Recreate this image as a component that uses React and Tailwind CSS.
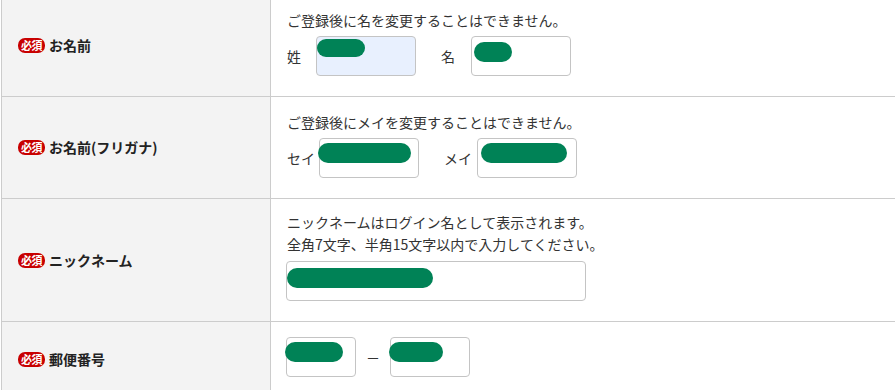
import React from 'react'

const font = { fontFamily: '"Noto Sans CJK JP", "Noto Sans", sans-serif' }

function Badge() {
  return (
    <span className="inline-flex items-center justify-center h-[15px] px-[3px] rounded-[7px] bg-[#c80000] text-white text-[11px] font-bold leading-none tracking-[-0.5px]">
      必須
    </span>
  )
}

function Blob({ className }) {
  return <span className={`absolute rounded-full bg-[#008256] ${className}`} />
}

function Field({ w, bg = 'bg-white', blob }) {
  return (
    <div className={`relative h-[40px] ${w} ${bg} border border-[#c4c4c4] rounded-[4px] shrink-0`}>
      <Blob className={blob} />
    </div>
  )
}

function Row({ label, children, pad = 'pt-[14px] pb-[20px]' }) {
  return (
    <div className="flex border-b border-[#cccccc]">
      <div className="w-[269px] shrink-0 bg-[#f3f3f3] border-r border-[#cccccc] flex items-center gap-[4px] pl-[16px]">
        <Badge />
        <span className="text-[14px] font-bold text-[#222]">{label}</span>
      </div>
      <div className={`flex-1 pl-[16px] ${pad} text-[14px] leading-[22px] text-[#333]`}>{children}</div>
    </div>
  )
}

export default function App() {
  return (
    <div className="w-[895px] h-[390px] overflow-hidden bg-white" style={font}>
      <div className="ml-[1px] -mt-[6px] border-l border-t border-[#cccccc]">
        <Row label="お名前">
          <p>ご登録後に名を変更することはできません。</p>
          <div className="flex items-center mt-[5px]">
            <span className="w-[29px] shrink-0">姓</span>
            <Field w="w-[100px]" bg="bg-[#e8f0fe]" blob="left-[0px] top-[2px] w-[48px] h-[18px]" />
            <span className="w-[30px] ml-[25px] shrink-0">名</span>
            <Field w="w-[100px]" blob="left-[2px] top-[5px] w-[38px] h-[20px]" />
          </div>
        </Row>
        <Row label="お名前(フリガナ)">
          <p>ご登録後にメイを変更することはできません。</p>
          <div className="flex items-center mt-[5px]">
            <span className="w-[32px] shrink-0">セイ</span>
            <Field w="w-[100px]" blob="-left-[2px] top-[4px] w-[93px] h-[20px]" />
            <span className="w-[33px] ml-[25px] shrink-0">メイ</span>
            <Field w="w-[100px]" blob="left-[3px] top-[4px] w-[86px] h-[20px]" />
          </div>
        </Row>
        <Row label="ニックネーム" pad="pt-[12px] pb-[20px]">
          <p>ニックネームはログイン名として表示されます。</p>
          <p>全角7文字、半角15文字以内で入力してください。</p>
          <div className="flex mt-[6px] -ml-[1px]">
            <Field w="w-[300px]" blob="left-[0px] top-[6px] w-[146px] h-[20px]" />
          </div>
        </Row>
        <Row label="郵便番号" pad="pt-[15px] pb-[20px]">
          <div className="flex items-center -ml-[1px]">
            <Field w="w-[70px]" blob="-left-[2px] top-[4px] w-[58px] h-[20px]" />
            <span className="w-[34px] text-center">－</span>
            <Field w="w-[80px]" blob="-left-[2px] top-[4px] w-[54px] h-[20px]" />
          </div>
        </Row>
      </div>
    </div>
  )
}
